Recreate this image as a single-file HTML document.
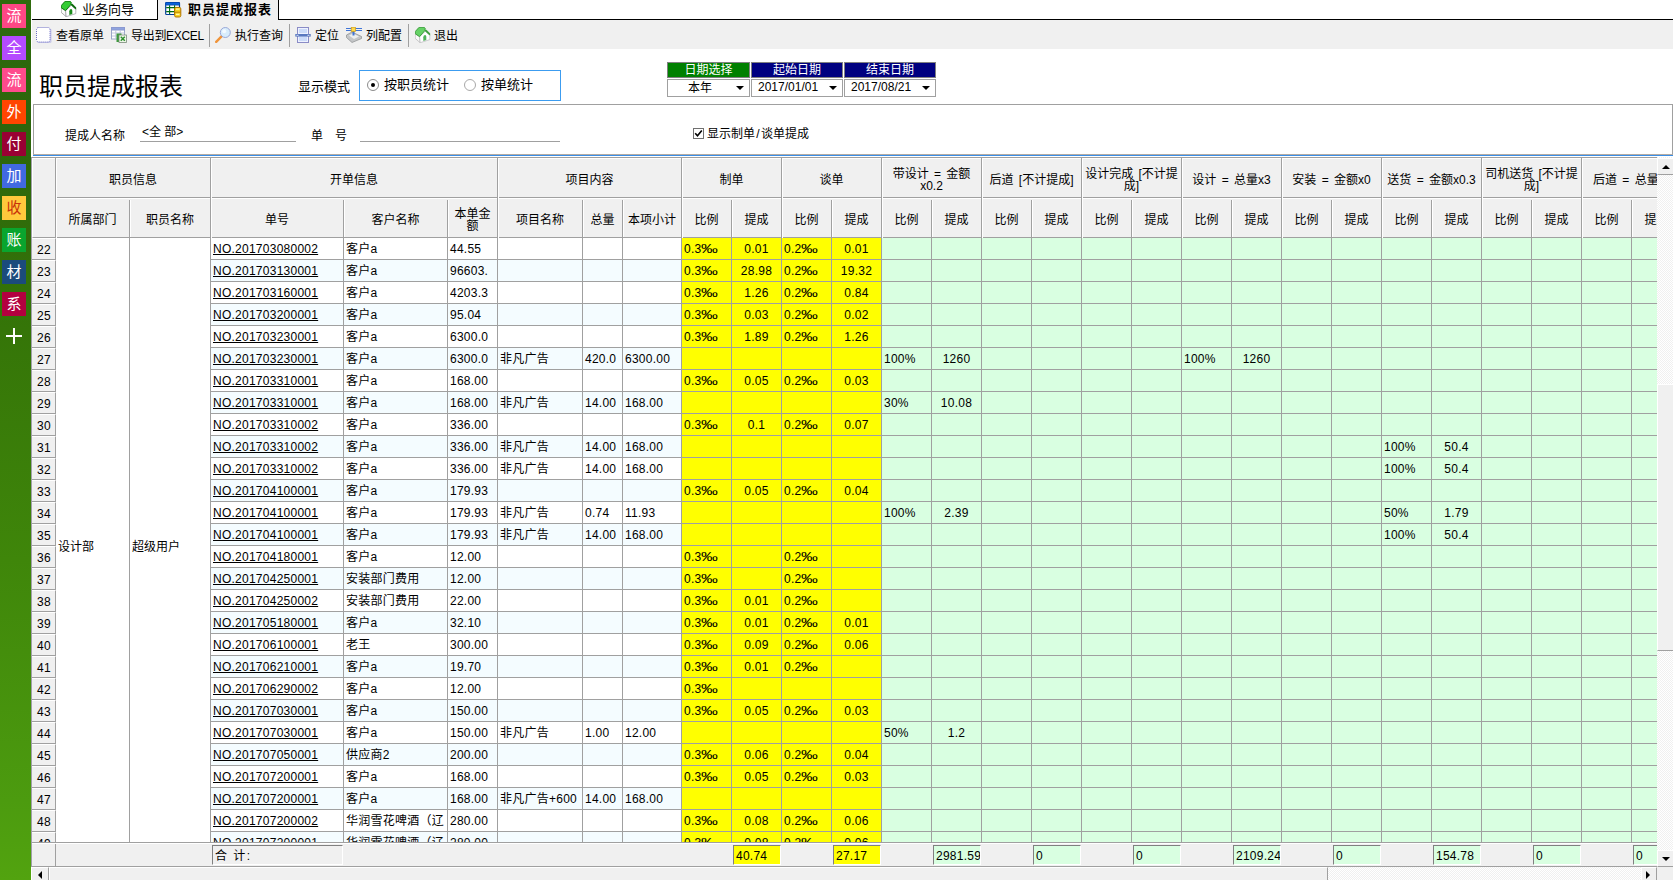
<!DOCTYPE html>
<html lang="zh-CN">
<head>
<meta charset="utf-8">
<title>职员提成报表</title>
<style>
html,body{margin:0;padding:0;}
body{width:1673px;height:880px;overflow:hidden;background:#fff;position:relative;
 font-family:"Liberation Sans","Noto Sans CJK SC",sans-serif;font-size:12px;color:#000;}
.abs,.abs-c>*{position:absolute;}
div{box-sizing:border-box;}
/* sidebar */
#side{position:absolute;left:0;top:0;width:31px;height:880px;
 background:linear-gradient(to bottom,#2f6b0d 0px,#2c650c 130px,#357508 330px,#3f860a 560px,#4c9b0f 800px,#52a30f 880px);}
#side .ic{position:absolute;left:2px;width:24px;height:24px;color:#fff;font-size:15px;line-height:22px;text-align:center;
 font-family:"Noto Sans CJK SC","Liberation Sans",sans-serif;}
/* tabs */
#tabline1{position:absolute;left:32px;top:19px;width:126px;height:1px;background:#000;}
#tabline2{position:absolute;left:278px;top:19px;width:1395px;height:1px;background:#000;}
#tab2{position:absolute;left:157px;top:0;width:122px;height:20px;background:#f0f0f0;border-left:1px solid #000;border-right:1px solid #000;}
.tabtxt{position:absolute;top:2px;height:16px;line-height:16px;font-size:13px;white-space:nowrap;}
/* toolbar */
#tb{position:absolute;left:32px;top:20px;width:1641px;height:29px;background:#f0f0f0;}
#tb .t{position:absolute;top:8px;height:16px;line-height:16px;font-size:12px;white-space:nowrap;}
#tb .sep{position:absolute;top:4px;width:1px;height:23px;background:#a0a0a0;}
#tb svg{position:absolute;top:7px;}
/* grid */
#grid{position:absolute;left:32px;top:157px;width:1625px;height:710px;overflow:hidden;background:#fff;}
.row{position:absolute;left:0;width:1625px;height:22px;}
.row .c{position:absolute;top:0;height:22px;border-right:1px solid #a0a0a0;border-bottom:1px solid #a0a0a0;background:#fff;
 line-height:23px;padding-left:2px;white-space:nowrap;overflow:hidden;letter-spacing:0.25px;}
.row.alt .c{background:#f4fcff;}
.row .c.y{background:#ffff00;}
.row .c.g{background:#d9ffe1;}
.row .c.ctr{text-align:center;padding-left:0;}
.row .rn{position:absolute;left:0;top:0;width:24px;height:22px;background:#f0f0f0;border-right:1px solid #a0a0a0;border-bottom:1px solid #a0a0a0;
 border-top:1px solid #fff;text-align:center;line-height:23px;letter-spacing:0.3px;padding-left:1px;}
.row u{text-decoration:underline;text-underline-offset:1px;}
.hg,.hs{position:absolute;display:flex;align-items:center;justify-content:center;text-align:center;line-height:12px;overflow:hidden;}
.hg{top:2px;height:38px;}
.hs{top:42px;height:38px;}
.hg span,.hs span{display:block;width:100%;word-spacing:2px;}
.hg span{padding-top:3px;}
.hs span{padding-top:4px;}
.vl{position:absolute;width:2px;background:linear-gradient(to right,#a0a0a0 0,#a0a0a0 1px,#fff 1px,#fff 2px);}
#foot{position:absolute;left:0;top:686px;width:1625px;height:24px;background:#f0f0f0;border-top:1px solid #fff;border-bottom:1px solid #a0a0a0;}
.fb{position:absolute;top:1px;height:20px;border-top:1px solid #808080;border-left:1px solid #808080;border-right:1px solid #fff;border-bottom:1px solid #fff;
 line-height:21px;padding-left:2px;white-space:nowrap;overflow:hidden;background:#f0f0f0;letter-spacing:0.25px;}
.fb.y{background:#ffff00;}
.fb.g{background:#d9ffe1;}
.pm{display:inline-block;width:17px;transform:scaleX(1.4);transform-origin:0 50%;letter-spacing:0;}
.tri{position:absolute;width:0;height:0;}
</style>
</head>
<body>
<!-- left sidebar -->
<div id="side">
 <div class="ic" style="top:4px;background:#ff4785">流</div>
 <div class="ic" style="top:36px;background:#b44bff">全</div>
 <div class="ic" style="top:68px;background:#ff4b8c">流</div>
 <div class="ic" style="top:100px;background:#ff4500">外</div>
 <div class="ic" style="top:132px;background:#990033">付</div>
 <div class="ic" style="top:164px;background:#4169e1">加</div>
 <div class="ic" style="top:196px;background:#ffc93c;color:#c8320a">收</div>
 <div class="ic" style="top:228px;background:#0aa52e">账</div>
 <div class="ic" style="top:260px;background:#1b4b7c">材</div>
 <div class="ic" style="top:292px;background:#b3003f">系</div>
 <div style="position:absolute;left:6px;top:335px;width:16px;height:2px;background:#fff"></div>
 <div style="position:absolute;left:13px;top:328px;width:2px;height:16px;background:#fff"></div>
</div>

<!-- tabs -->
<div id="tabline1"></div><div id="tabline2"></div>
<div id="tab2"></div>
<svg class="abs" style="left:61px;top:1px" width="16" height="16" viewBox="0 0 16 16">
 <polygon points="0.2,6.8 4.6,9.7 5.2,15.7 0.2,11.4" fill="#fafafa" stroke="#8c8c8c" stroke-width="0.7"/>
 <polygon points="4.6,9.7 10.3,4.3 14.8,8 14.8,12.6 5.2,15.7" fill="#ffffff" stroke="#9a9aa0" stroke-width="0.7"/>
 <polygon points="9.3,2.8 11.4,2.8 15.2,6.6 15.2,8.4 13.6,7.6 10.4,4.6" fill="#0b6b0b"/>
 <polygon points="0.3,4.5 4.1,0.3 9.2,0.3 10.1,1.3 9.9,3.5 4.6,9.6 0.3,6.8" fill="#33cc33" stroke="#0d7a0d" stroke-width="1"/>
 <path d="M8.3 13.9V10.2Q8.3 8.3 9.9 8.1Q11.3 8 11.3 9.8V12.9Z" fill="#1c8c1c"/>
</svg>
<div class="tabtxt" style="left:82px">业务向导</div>
<svg class="abs" style="left:165px;top:2px" width="17" height="16" viewBox="0 0 17 16">
 <rect x="0.7" y="0.7" width="13.8" height="11.8" rx="0.8" fill="#ffffff" stroke="#003f98" stroke-width="1.2"/>
 <rect x="0.7" y="0.5" width="13.8" height="2.6" rx="0.6" fill="#0a62dc" stroke="#0046b0" stroke-width="0.8"/>
 <path d="M1.2 5.6H14M1.2 9.6H14M4.6 3.2V12M9.6 3.2V12" stroke="#006a10" stroke-width="1.1" fill="none"/>
 <rect x="9.6" y="5.4" width="6.2" height="9.6" rx="1.4" fill="#f7d21e" stroke="#b27400" stroke-width="1"/>
 <path d="M10 10.2H15.4" stroke="#b27400" stroke-width="0.9"/>
 <path d="M11 7.2H14.4M11 12.4H14.4" stroke="#fff6a8" stroke-width="1.2"/>
</svg>
<div class="tabtxt" style="left:188px;font-weight:bold;letter-spacing:1px">职员提成报表</div>

<!-- toolbar -->
<div id="tb">
 <svg style="left:4px" width="16" height="16" viewBox="0 0 16 16">
  <rect x="1.5" y="1.5" width="14" height="14.5" rx="1.5" fill="#c9c9e8"/>
  <rect x="0.5" y="0.5" width="13.5" height="14.5" rx="2" fill="#fff" stroke="#6c6cc4" stroke-width="1" stroke-dasharray="1 1"/>
 </svg>
 <div class="t" style="left:24px">查看原单</div>
 <svg style="left:79px" width="16" height="16" viewBox="0 0 16 16">
  <rect x="0.5" y="0.5" width="13" height="11.5" fill="#fff" stroke="#9aa6c8"/>
  <rect x="0.5" y="0.5" width="13" height="2.5" fill="#8fa4e0" stroke="#8c9ad0"/>
  <path d="M1 6H13.5M1 9H13.5M4.8 3V12M9.2 3V12" stroke="#c0c6dc" stroke-width="1" fill="none"/>
  <rect x="5.5" y="6.5" width="5" height="8.5" fill="#3d9a3d"/>
  <rect x="8" y="8" width="7.5" height="7.5" fill="#f0f8ea" stroke="#7a8a7a" stroke-width="0.8"/>
  <path d="M9.8 9.8L13.8 13.8M13.8 9.8L9.8 13.8" stroke="#2f8f2f" stroke-width="1.5"/>
 </svg>
 <div class="t" style="left:99px;letter-spacing:-0.3px">导出到EXCEL</div>
 <div class="sep" style="left:177px"></div>
 <svg style="left:183px" width="16" height="16" viewBox="0 0 16 16">
  <path d="M6.8 9.2L1.2 14.8" stroke="#f0943a" stroke-width="2.4" stroke-linecap="round"/>
  <circle cx="10.3" cy="5.5" r="5" fill="#d8ecfb" stroke="#9aa8d8" stroke-width="1"/>
  <circle cx="9.2" cy="4.3" r="2" fill="#f4faff"/>
 </svg>
 <div class="t" style="left:203px">执行查询</div>
 <div class="sep" style="left:257px"></div>
 <svg style="left:263px" width="16" height="16" viewBox="0 0 16 16">
  <rect x="2.5" y="0.5" width="11" height="15" fill="#eef2ff" stroke="#8a8cc6"/>
  <path d="M4 3H12M4 5H12M4 11H12M4 13H12" stroke="#a8c4f4" stroke-width="1"/>
  <rect x="0.3" y="7" width="15.4" height="2.6" fill="#5878c0"/>
  <path d="M1.5 8.3H3.5M12.5 8.3H14.5" stroke="#fff" stroke-width="0.8"/>
 </svg>
 <div class="t" style="left:283px">定位</div>
 <svg style="left:314px" width="16" height="16" viewBox="0 0 16 16">
  <path d="M0 1.5H16M0 3.5H16" stroke="#3f74d6" stroke-width="1"/>
  <polygon points="0.5,8 6,5 15.5,9.5 15.5,11.5 6,15.5 0.5,10.5" fill="#c4c6c8" stroke="#8a8c8e" stroke-width="0.7"/>
  <polygon points="3,8.5 7,6.5 13,9.5 8,12" fill="#eceeef"/>
  <rect x="6.5" y="4" width="2" height="4.5" fill="#3f74d6"/>
  <rect x="5.2" y="0.2" width="4.4" height="4.2" fill="#ffd84a" stroke="#c89a1a" stroke-width="0.7"/>
 </svg>
 <div class="t" style="left:334px">列配置</div>
 <div class="sep" style="left:376px"></div>
 <svg style="left:383px" width="16" height="16" viewBox="0 0 16 16">
 <polygon points="0.2,6.8 4.6,9.7 5.2,15.7 0.2,11.4" fill="#fafafa" stroke="#b0b0b0" stroke-width="0.7"/>
 <polygon points="4.6,9.7 10.3,4.3 14.8,8 14.8,12.6 5.2,15.7" fill="#ffffff" stroke="#b8b8bc" stroke-width="0.7"/>
 <polygon points="9.3,2.8 11.4,2.8 15.2,6.6 15.2,8.4 13.6,7.6 10.4,4.6" fill="#3f9f3f"/>
 <polygon points="0.3,4.5 4.1,0.3 9.2,0.3 10.1,1.3 9.9,3.5 4.6,9.6 0.3,6.8" fill="#66d266" stroke="#3f9f3f" stroke-width="1"/>
 <path d="M8.3 13.9V10.2Q8.3 8.3 9.9 8.1Q11.3 8 11.3 9.8V12.9Z" fill="#4fb25a"/>
</svg>
 <div class="t" style="left:402px">退出</div>
</div>

<!-- title + mode -->
<div class="abs" style="left:39px;top:70px;height:34px;line-height:34px;font-size:24px;white-space:nowrap;font-family:'Liberation Sans','Noto Sans CJK SC',sans-serif">职员提成报表</div>
<div class="abs" style="left:298px;top:77px;height:20px;line-height:20px;font-size:13px;white-space:nowrap">显示模式</div>
<div class="abs" style="left:359px;top:70px;width:202px;height:31px;border:1px solid #3c9cf0;background:#fff"></div>
<div class="abs" style="left:367px;top:79px;width:12px;height:12px;border:1px solid #8c8c8c;border-radius:50%;background:#fff"></div>
<div class="abs" style="left:371px;top:83px;width:4px;height:4px;border-radius:50%;background:#000"></div>
<div class="abs" style="left:384px;top:75px;height:20px;line-height:20px;font-size:13px;white-space:nowrap">按职员统计</div>
<div class="abs" style="left:464px;top:79px;width:12px;height:12px;border:1px solid #a8a8a8;border-radius:50%;background:#fff"></div>
<div class="abs" style="left:481px;top:75px;height:20px;line-height:20px;font-size:13px;white-space:nowrap">按单统计</div>

<!-- date boxes -->
<div class="abs" style="left:667px;top:62px;width:83px;height:16px;background:#008000;border:1px solid #808080;color:#fff;text-align:center;line-height:15px">日期选择</div>
<div class="abs" style="left:751px;top:62px;width:92px;height:16px;background:#000080;border:1px solid #808080;color:#fff;text-align:center;line-height:15px">起始日期</div>
<div class="abs" style="left:844px;top:62px;width:92px;height:16px;background:#000080;border:1px solid #808080;color:#fff;text-align:center;line-height:15px">结束日期</div>
<div class="abs" style="left:667px;top:79px;width:83px;height:18px;background:#fff;border:1px solid #a0a0a0;line-height:17px;padding-left:20px">本年</div>
<div class="abs" style="left:751px;top:79px;width:92px;height:18px;background:#fff;border:1px solid #a0a0a0;line-height:15px;padding-left:6px">2017/01/01</div>
<div class="abs" style="left:844px;top:79px;width:92px;height:18px;background:#fff;border:1px solid #a0a0a0;line-height:15px;padding-left:6px">2017/08/21</div>
<div class="tri" style="left:736px;top:86px;border-left:4px solid transparent;border-right:4px solid transparent;border-top:4px solid #000"></div>
<div class="tri" style="left:829px;top:86px;border-left:4px solid transparent;border-right:4px solid transparent;border-top:4px solid #000"></div>
<div class="tri" style="left:922px;top:86px;border-left:4px solid transparent;border-right:4px solid transparent;border-top:4px solid #000"></div>

<!-- filter panel -->
<div class="abs" style="left:33px;top:104px;width:1640px;height:52px;border:1px solid #a0a0a0;border-bottom:none;background:#fff"></div>
<div class="abs" style="left:33px;top:154px;width:1640px;height:1px;background:#b4aca4"></div>
<div class="abs" style="left:33px;top:155px;width:1640px;height:1px;background:#3a8ee6"></div>
<div class="abs" style="left:31px;top:157px;width:1px;height:710px;background:#a0a0a8"></div>
<div class="abs" style="left:65px;top:127px;height:18px;line-height:18px;white-space:nowrap">提成人名称</div>
<div class="abs" style="left:142px;top:123px;height:18px;line-height:18px;white-space:nowrap">&lt;全 部&gt;</div>
<div class="abs" style="left:140px;top:141px;width:156px;height:1px;background:#a0a0a0"></div>
<div class="abs" style="left:311px;top:127px;height:18px;line-height:18px;white-space:nowrap">单<span style="display:inline-block;width:12px"> </span>号</div>
<div class="abs" style="left:360px;top:141px;width:200px;height:1px;background:#a0a0a0"></div>
<div class="abs" style="left:693px;top:128px;width:11px;height:11px;border:1px solid #707070;background:#fff"></div>
<svg class="abs" style="left:694px;top:129px" width="9" height="9" viewBox="0 0 9 9"><path d="M1.2 4.2L3.5 6.8L7.8 1.5" fill="none" stroke="#000" stroke-width="1.6"/></svg>
<div class="abs" style="left:707px;top:125px;height:18px;line-height:18px;white-space:nowrap">显示制单<span style="display:inline-block;width:6px;text-align:center">/</span>谈单提成</div>

<!-- grid -->
<div id="grid">
 <div style="position:absolute;left:0;top:0;width:1625px;height:1px;background:#a0a0a0"></div>
 <div style="position:absolute;left:0;top:1px;width:1625px;height:80px;background:#f0f0f0;border-bottom:1px solid #a0a0a0;border-top:1px solid #fff;border-left:1px solid #fff"></div>
 <div style="position:absolute;left:24px;top:40px;width:1601px;height:2px;background:linear-gradient(to bottom,#a0a0a0 0,#a0a0a0 1px,#fff 1px,#fff 2px)"></div>
<div class="hg" style="left:24px;width:154px"><span>职员信息</span></div>
<div class="hg" style="left:179px;width:286px"><span>开单信息</span></div>
<div class="hg" style="left:466px;width:183px"><span>项目内容</span></div>
<div class="hg" style="left:650px;width:99px"><span>制单</span></div>
<div class="hg" style="left:750px;width:99px"><span>谈单</span></div>
<div class="hg" style="left:850px;width:99px"><span>带设计 = 金额<br>x0.2</span></div>
<div class="hg" style="left:950px;width:99px"><span>后道 [不计提成]</span></div>
<div class="hg" style="left:1050px;width:99px"><span>设计完成 [不计提<br>成]</span></div>
<div class="hg" style="left:1150px;width:99px"><span>设计 = 总量x3</span></div>
<div class="hg" style="left:1250px;width:99px"><span>安装 = 金额x0</span></div>
<div class="hg" style="left:1350px;width:99px"><span>送货 = 金额x0.3</span></div>
<div class="hg" style="left:1450px;width:99px"><span>司机送货 [不计提<br>成]</span></div>
<div class="hg" style="left:1550px;width:99px"><span style="white-space:nowrap;text-align:left;padding-left:11px">后道 = 总量x1</span></div>
<div class="hs" style="left:24px;width:73px"><span>所属部门</span></div>
<div class="hs" style="left:98px;width:80px"><span>职员名称</span></div>
<div class="hs" style="left:179px;width:132px"><span>单号</span></div>
<div class="hs" style="left:312px;width:103px"><span>客户名称</span></div>
<div class="hs" style="left:416px;width:49px"><span>本单金<br>额</span></div>
<div class="hs" style="left:466px;width:84px"><span>项目名称</span></div>
<div class="hs" style="left:551px;width:39px"><span>总量</span></div>
<div class="hs" style="left:591px;width:58px"><span>本项小计</span></div>
<div class="hs" style="left:650px;width:49px"><span>比例</span></div>
<div class="hs" style="left:700px;width:49px"><span>提成</span></div>
<div class="hs" style="left:750px;width:49px"><span>比例</span></div>
<div class="hs" style="left:800px;width:49px"><span>提成</span></div>
<div class="hs" style="left:850px;width:49px"><span>比例</span></div>
<div class="hs" style="left:900px;width:49px"><span>提成</span></div>
<div class="hs" style="left:950px;width:49px"><span>比例</span></div>
<div class="hs" style="left:1000px;width:49px"><span>提成</span></div>
<div class="hs" style="left:1050px;width:49px"><span>比例</span></div>
<div class="hs" style="left:1100px;width:49px"><span>提成</span></div>
<div class="hs" style="left:1150px;width:49px"><span>比例</span></div>
<div class="hs" style="left:1200px;width:49px"><span>提成</span></div>
<div class="hs" style="left:1250px;width:49px"><span>比例</span></div>
<div class="hs" style="left:1300px;width:49px"><span>提成</span></div>
<div class="hs" style="left:1350px;width:49px"><span>比例</span></div>
<div class="hs" style="left:1400px;width:49px"><span>提成</span></div>
<div class="hs" style="left:1450px;width:49px"><span>比例</span></div>
<div class="hs" style="left:1500px;width:49px"><span>提成</span></div>
<div class="hs" style="left:1550px;width:49px"><span>比例</span></div>
<div class="hs" style="left:1600px;width:49px"><span>提成</span></div>
<div class="vl" style="left:23px;top:1px;height:80px"></div>
<div class="vl" style="left:97px;top:43px;height:37px"></div>
<div class="vl" style="left:178px;top:1px;height:80px"></div>
<div class="vl" style="left:311px;top:43px;height:37px"></div>
<div class="vl" style="left:415px;top:43px;height:37px"></div>
<div class="vl" style="left:465px;top:1px;height:80px"></div>
<div class="vl" style="left:550px;top:43px;height:37px"></div>
<div class="vl" style="left:590px;top:43px;height:37px"></div>
<div class="vl" style="left:649px;top:1px;height:80px"></div>
<div class="vl" style="left:699px;top:43px;height:37px"></div>
<div class="vl" style="left:749px;top:1px;height:80px"></div>
<div class="vl" style="left:799px;top:43px;height:37px"></div>
<div class="vl" style="left:849px;top:1px;height:80px"></div>
<div class="vl" style="left:899px;top:43px;height:37px"></div>
<div class="vl" style="left:949px;top:1px;height:80px"></div>
<div class="vl" style="left:999px;top:43px;height:37px"></div>
<div class="vl" style="left:1049px;top:1px;height:80px"></div>
<div class="vl" style="left:1099px;top:43px;height:37px"></div>
<div class="vl" style="left:1149px;top:1px;height:80px"></div>
<div class="vl" style="left:1199px;top:43px;height:37px"></div>
<div class="vl" style="left:1249px;top:1px;height:80px"></div>
<div class="vl" style="left:1299px;top:43px;height:37px"></div>
<div class="vl" style="left:1349px;top:1px;height:80px"></div>
<div class="vl" style="left:1399px;top:43px;height:37px"></div>
<div class="vl" style="left:1449px;top:1px;height:80px"></div>
<div class="vl" style="left:1499px;top:43px;height:37px"></div>
<div class="vl" style="left:1549px;top:1px;height:80px"></div>
<div class="vl" style="left:1599px;top:43px;height:37px"></div>
 <!-- merged dept / employee cells -->
 <div style="position:absolute;left:24px;top:81px;width:74px;height:605px;background:#fff;border-right:1px solid #a0a0a0;border-bottom:1px solid #a0a0a0;line-height:618px;padding-left:2px;white-space:nowrap">设计部</div>
 <div style="position:absolute;left:98px;top:81px;width:81px;height:605px;background:#fff;border-right:1px solid #a0a0a0;border-bottom:1px solid #a0a0a0;line-height:618px;padding-left:2px;white-space:nowrap">超级用户</div>
 <div id="rows" style="position:absolute;left:0;top:-157px;width:1625px;height:843px;overflow:hidden;clip-path:inset(238px 0 0 0)">
<div class="row" style="top:238px">
<div class="rn">22</div>
<div class="c" style="left:179px;width:133px"><u>NO.201703080002</u></div>
<div class="c" style="left:312px;width:104px">客户a</div>
<div class="c" style="left:416px;width:50px">44.55</div>
<div class="c" style="left:466px;width:85px"></div>
<div class="c" style="left:551px;width:40px"></div>
<div class="c" style="left:591px;width:59px"></div>
<div class="c y" style="left:650px;width:50px">0.3<span class="pm">‰</span></div>
<div class="c y ctr" style="left:700px;width:50px">0.01</div>
<div class="c y" style="left:750px;width:50px">0.2<span class="pm">‰</span></div>
<div class="c y ctr" style="left:800px;width:50px">0.01</div>
<div class="c g" style="left:850px;width:50px"></div>
<div class="c g ctr" style="left:900px;width:50px"></div>
<div class="c g" style="left:950px;width:50px"></div>
<div class="c g ctr" style="left:1000px;width:50px"></div>
<div class="c g" style="left:1050px;width:50px"></div>
<div class="c g ctr" style="left:1100px;width:50px"></div>
<div class="c g" style="left:1150px;width:50px"></div>
<div class="c g ctr" style="left:1200px;width:50px"></div>
<div class="c g" style="left:1250px;width:50px"></div>
<div class="c g ctr" style="left:1300px;width:50px"></div>
<div class="c g" style="left:1350px;width:50px"></div>
<div class="c g ctr" style="left:1400px;width:50px"></div>
<div class="c g" style="left:1450px;width:50px"></div>
<div class="c g ctr" style="left:1500px;width:50px"></div>
<div class="c g" style="left:1550px;width:50px"></div>
<div class="c g ctr" style="left:1600px;width:50px"></div>
</div>
<div class="row alt" style="top:260px">
<div class="rn">23</div>
<div class="c" style="left:179px;width:133px"><u>NO.201703130001</u></div>
<div class="c" style="left:312px;width:104px">客户a</div>
<div class="c" style="left:416px;width:50px">96603.</div>
<div class="c" style="left:466px;width:85px"></div>
<div class="c" style="left:551px;width:40px"></div>
<div class="c" style="left:591px;width:59px"></div>
<div class="c y" style="left:650px;width:50px">0.3<span class="pm">‰</span></div>
<div class="c y ctr" style="left:700px;width:50px">28.98</div>
<div class="c y" style="left:750px;width:50px">0.2<span class="pm">‰</span></div>
<div class="c y ctr" style="left:800px;width:50px">19.32</div>
<div class="c g" style="left:850px;width:50px"></div>
<div class="c g ctr" style="left:900px;width:50px"></div>
<div class="c g" style="left:950px;width:50px"></div>
<div class="c g ctr" style="left:1000px;width:50px"></div>
<div class="c g" style="left:1050px;width:50px"></div>
<div class="c g ctr" style="left:1100px;width:50px"></div>
<div class="c g" style="left:1150px;width:50px"></div>
<div class="c g ctr" style="left:1200px;width:50px"></div>
<div class="c g" style="left:1250px;width:50px"></div>
<div class="c g ctr" style="left:1300px;width:50px"></div>
<div class="c g" style="left:1350px;width:50px"></div>
<div class="c g ctr" style="left:1400px;width:50px"></div>
<div class="c g" style="left:1450px;width:50px"></div>
<div class="c g ctr" style="left:1500px;width:50px"></div>
<div class="c g" style="left:1550px;width:50px"></div>
<div class="c g ctr" style="left:1600px;width:50px"></div>
</div>
<div class="row" style="top:282px">
<div class="rn">24</div>
<div class="c" style="left:179px;width:133px"><u>NO.201703160001</u></div>
<div class="c" style="left:312px;width:104px">客户a</div>
<div class="c" style="left:416px;width:50px">4203.3</div>
<div class="c" style="left:466px;width:85px"></div>
<div class="c" style="left:551px;width:40px"></div>
<div class="c" style="left:591px;width:59px"></div>
<div class="c y" style="left:650px;width:50px">0.3<span class="pm">‰</span></div>
<div class="c y ctr" style="left:700px;width:50px">1.26</div>
<div class="c y" style="left:750px;width:50px">0.2<span class="pm">‰</span></div>
<div class="c y ctr" style="left:800px;width:50px">0.84</div>
<div class="c g" style="left:850px;width:50px"></div>
<div class="c g ctr" style="left:900px;width:50px"></div>
<div class="c g" style="left:950px;width:50px"></div>
<div class="c g ctr" style="left:1000px;width:50px"></div>
<div class="c g" style="left:1050px;width:50px"></div>
<div class="c g ctr" style="left:1100px;width:50px"></div>
<div class="c g" style="left:1150px;width:50px"></div>
<div class="c g ctr" style="left:1200px;width:50px"></div>
<div class="c g" style="left:1250px;width:50px"></div>
<div class="c g ctr" style="left:1300px;width:50px"></div>
<div class="c g" style="left:1350px;width:50px"></div>
<div class="c g ctr" style="left:1400px;width:50px"></div>
<div class="c g" style="left:1450px;width:50px"></div>
<div class="c g ctr" style="left:1500px;width:50px"></div>
<div class="c g" style="left:1550px;width:50px"></div>
<div class="c g ctr" style="left:1600px;width:50px"></div>
</div>
<div class="row alt" style="top:304px">
<div class="rn">25</div>
<div class="c" style="left:179px;width:133px"><u>NO.201703200001</u></div>
<div class="c" style="left:312px;width:104px">客户a</div>
<div class="c" style="left:416px;width:50px">95.04</div>
<div class="c" style="left:466px;width:85px"></div>
<div class="c" style="left:551px;width:40px"></div>
<div class="c" style="left:591px;width:59px"></div>
<div class="c y" style="left:650px;width:50px">0.3<span class="pm">‰</span></div>
<div class="c y ctr" style="left:700px;width:50px">0.03</div>
<div class="c y" style="left:750px;width:50px">0.2<span class="pm">‰</span></div>
<div class="c y ctr" style="left:800px;width:50px">0.02</div>
<div class="c g" style="left:850px;width:50px"></div>
<div class="c g ctr" style="left:900px;width:50px"></div>
<div class="c g" style="left:950px;width:50px"></div>
<div class="c g ctr" style="left:1000px;width:50px"></div>
<div class="c g" style="left:1050px;width:50px"></div>
<div class="c g ctr" style="left:1100px;width:50px"></div>
<div class="c g" style="left:1150px;width:50px"></div>
<div class="c g ctr" style="left:1200px;width:50px"></div>
<div class="c g" style="left:1250px;width:50px"></div>
<div class="c g ctr" style="left:1300px;width:50px"></div>
<div class="c g" style="left:1350px;width:50px"></div>
<div class="c g ctr" style="left:1400px;width:50px"></div>
<div class="c g" style="left:1450px;width:50px"></div>
<div class="c g ctr" style="left:1500px;width:50px"></div>
<div class="c g" style="left:1550px;width:50px"></div>
<div class="c g ctr" style="left:1600px;width:50px"></div>
</div>
<div class="row" style="top:326px">
<div class="rn">26</div>
<div class="c" style="left:179px;width:133px"><u>NO.201703230001</u></div>
<div class="c" style="left:312px;width:104px">客户a</div>
<div class="c" style="left:416px;width:50px">6300.0</div>
<div class="c" style="left:466px;width:85px"></div>
<div class="c" style="left:551px;width:40px"></div>
<div class="c" style="left:591px;width:59px"></div>
<div class="c y" style="left:650px;width:50px">0.3<span class="pm">‰</span></div>
<div class="c y ctr" style="left:700px;width:50px">1.89</div>
<div class="c y" style="left:750px;width:50px">0.2<span class="pm">‰</span></div>
<div class="c y ctr" style="left:800px;width:50px">1.26</div>
<div class="c g" style="left:850px;width:50px"></div>
<div class="c g ctr" style="left:900px;width:50px"></div>
<div class="c g" style="left:950px;width:50px"></div>
<div class="c g ctr" style="left:1000px;width:50px"></div>
<div class="c g" style="left:1050px;width:50px"></div>
<div class="c g ctr" style="left:1100px;width:50px"></div>
<div class="c g" style="left:1150px;width:50px"></div>
<div class="c g ctr" style="left:1200px;width:50px"></div>
<div class="c g" style="left:1250px;width:50px"></div>
<div class="c g ctr" style="left:1300px;width:50px"></div>
<div class="c g" style="left:1350px;width:50px"></div>
<div class="c g ctr" style="left:1400px;width:50px"></div>
<div class="c g" style="left:1450px;width:50px"></div>
<div class="c g ctr" style="left:1500px;width:50px"></div>
<div class="c g" style="left:1550px;width:50px"></div>
<div class="c g ctr" style="left:1600px;width:50px"></div>
</div>
<div class="row alt" style="top:348px">
<div class="rn">27</div>
<div class="c" style="left:179px;width:133px"><u>NO.201703230001</u></div>
<div class="c" style="left:312px;width:104px">客户a</div>
<div class="c" style="left:416px;width:50px">6300.0</div>
<div class="c" style="left:466px;width:85px">非凡广告</div>
<div class="c" style="left:551px;width:40px">420.0</div>
<div class="c" style="left:591px;width:59px">6300.00</div>
<div class="c y" style="left:650px;width:50px"></div>
<div class="c y ctr" style="left:700px;width:50px"></div>
<div class="c y" style="left:750px;width:50px"></div>
<div class="c y ctr" style="left:800px;width:50px"></div>
<div class="c g" style="left:850px;width:50px">100%</div>
<div class="c g ctr" style="left:900px;width:50px">1260</div>
<div class="c g" style="left:950px;width:50px"></div>
<div class="c g ctr" style="left:1000px;width:50px"></div>
<div class="c g" style="left:1050px;width:50px"></div>
<div class="c g ctr" style="left:1100px;width:50px"></div>
<div class="c g" style="left:1150px;width:50px">100%</div>
<div class="c g ctr" style="left:1200px;width:50px">1260</div>
<div class="c g" style="left:1250px;width:50px"></div>
<div class="c g ctr" style="left:1300px;width:50px"></div>
<div class="c g" style="left:1350px;width:50px"></div>
<div class="c g ctr" style="left:1400px;width:50px"></div>
<div class="c g" style="left:1450px;width:50px"></div>
<div class="c g ctr" style="left:1500px;width:50px"></div>
<div class="c g" style="left:1550px;width:50px"></div>
<div class="c g ctr" style="left:1600px;width:50px"></div>
</div>
<div class="row" style="top:370px">
<div class="rn">28</div>
<div class="c" style="left:179px;width:133px"><u>NO.201703310001</u></div>
<div class="c" style="left:312px;width:104px">客户a</div>
<div class="c" style="left:416px;width:50px">168.00</div>
<div class="c" style="left:466px;width:85px"></div>
<div class="c" style="left:551px;width:40px"></div>
<div class="c" style="left:591px;width:59px"></div>
<div class="c y" style="left:650px;width:50px">0.3<span class="pm">‰</span></div>
<div class="c y ctr" style="left:700px;width:50px">0.05</div>
<div class="c y" style="left:750px;width:50px">0.2<span class="pm">‰</span></div>
<div class="c y ctr" style="left:800px;width:50px">0.03</div>
<div class="c g" style="left:850px;width:50px"></div>
<div class="c g ctr" style="left:900px;width:50px"></div>
<div class="c g" style="left:950px;width:50px"></div>
<div class="c g ctr" style="left:1000px;width:50px"></div>
<div class="c g" style="left:1050px;width:50px"></div>
<div class="c g ctr" style="left:1100px;width:50px"></div>
<div class="c g" style="left:1150px;width:50px"></div>
<div class="c g ctr" style="left:1200px;width:50px"></div>
<div class="c g" style="left:1250px;width:50px"></div>
<div class="c g ctr" style="left:1300px;width:50px"></div>
<div class="c g" style="left:1350px;width:50px"></div>
<div class="c g ctr" style="left:1400px;width:50px"></div>
<div class="c g" style="left:1450px;width:50px"></div>
<div class="c g ctr" style="left:1500px;width:50px"></div>
<div class="c g" style="left:1550px;width:50px"></div>
<div class="c g ctr" style="left:1600px;width:50px"></div>
</div>
<div class="row alt" style="top:392px">
<div class="rn">29</div>
<div class="c" style="left:179px;width:133px"><u>NO.201703310001</u></div>
<div class="c" style="left:312px;width:104px">客户a</div>
<div class="c" style="left:416px;width:50px">168.00</div>
<div class="c" style="left:466px;width:85px">非凡广告</div>
<div class="c" style="left:551px;width:40px">14.00</div>
<div class="c" style="left:591px;width:59px">168.00</div>
<div class="c y" style="left:650px;width:50px"></div>
<div class="c y ctr" style="left:700px;width:50px"></div>
<div class="c y" style="left:750px;width:50px"></div>
<div class="c y ctr" style="left:800px;width:50px"></div>
<div class="c g" style="left:850px;width:50px">30%</div>
<div class="c g ctr" style="left:900px;width:50px">10.08</div>
<div class="c g" style="left:950px;width:50px"></div>
<div class="c g ctr" style="left:1000px;width:50px"></div>
<div class="c g" style="left:1050px;width:50px"></div>
<div class="c g ctr" style="left:1100px;width:50px"></div>
<div class="c g" style="left:1150px;width:50px"></div>
<div class="c g ctr" style="left:1200px;width:50px"></div>
<div class="c g" style="left:1250px;width:50px"></div>
<div class="c g ctr" style="left:1300px;width:50px"></div>
<div class="c g" style="left:1350px;width:50px"></div>
<div class="c g ctr" style="left:1400px;width:50px"></div>
<div class="c g" style="left:1450px;width:50px"></div>
<div class="c g ctr" style="left:1500px;width:50px"></div>
<div class="c g" style="left:1550px;width:50px"></div>
<div class="c g ctr" style="left:1600px;width:50px"></div>
</div>
<div class="row" style="top:414px">
<div class="rn">30</div>
<div class="c" style="left:179px;width:133px"><u>NO.201703310002</u></div>
<div class="c" style="left:312px;width:104px">客户a</div>
<div class="c" style="left:416px;width:50px">336.00</div>
<div class="c" style="left:466px;width:85px"></div>
<div class="c" style="left:551px;width:40px"></div>
<div class="c" style="left:591px;width:59px"></div>
<div class="c y" style="left:650px;width:50px">0.3<span class="pm">‰</span></div>
<div class="c y ctr" style="left:700px;width:50px">0.1</div>
<div class="c y" style="left:750px;width:50px">0.2<span class="pm">‰</span></div>
<div class="c y ctr" style="left:800px;width:50px">0.07</div>
<div class="c g" style="left:850px;width:50px"></div>
<div class="c g ctr" style="left:900px;width:50px"></div>
<div class="c g" style="left:950px;width:50px"></div>
<div class="c g ctr" style="left:1000px;width:50px"></div>
<div class="c g" style="left:1050px;width:50px"></div>
<div class="c g ctr" style="left:1100px;width:50px"></div>
<div class="c g" style="left:1150px;width:50px"></div>
<div class="c g ctr" style="left:1200px;width:50px"></div>
<div class="c g" style="left:1250px;width:50px"></div>
<div class="c g ctr" style="left:1300px;width:50px"></div>
<div class="c g" style="left:1350px;width:50px"></div>
<div class="c g ctr" style="left:1400px;width:50px"></div>
<div class="c g" style="left:1450px;width:50px"></div>
<div class="c g ctr" style="left:1500px;width:50px"></div>
<div class="c g" style="left:1550px;width:50px"></div>
<div class="c g ctr" style="left:1600px;width:50px"></div>
</div>
<div class="row alt" style="top:436px">
<div class="rn">31</div>
<div class="c" style="left:179px;width:133px"><u>NO.201703310002</u></div>
<div class="c" style="left:312px;width:104px">客户a</div>
<div class="c" style="left:416px;width:50px">336.00</div>
<div class="c" style="left:466px;width:85px">非凡广告</div>
<div class="c" style="left:551px;width:40px">14.00</div>
<div class="c" style="left:591px;width:59px">168.00</div>
<div class="c y" style="left:650px;width:50px"></div>
<div class="c y ctr" style="left:700px;width:50px"></div>
<div class="c y" style="left:750px;width:50px"></div>
<div class="c y ctr" style="left:800px;width:50px"></div>
<div class="c g" style="left:850px;width:50px"></div>
<div class="c g ctr" style="left:900px;width:50px"></div>
<div class="c g" style="left:950px;width:50px"></div>
<div class="c g ctr" style="left:1000px;width:50px"></div>
<div class="c g" style="left:1050px;width:50px"></div>
<div class="c g ctr" style="left:1100px;width:50px"></div>
<div class="c g" style="left:1150px;width:50px"></div>
<div class="c g ctr" style="left:1200px;width:50px"></div>
<div class="c g" style="left:1250px;width:50px"></div>
<div class="c g ctr" style="left:1300px;width:50px"></div>
<div class="c g" style="left:1350px;width:50px">100%</div>
<div class="c g ctr" style="left:1400px;width:50px">50.4</div>
<div class="c g" style="left:1450px;width:50px"></div>
<div class="c g ctr" style="left:1500px;width:50px"></div>
<div class="c g" style="left:1550px;width:50px"></div>
<div class="c g ctr" style="left:1600px;width:50px"></div>
</div>
<div class="row" style="top:458px">
<div class="rn">32</div>
<div class="c" style="left:179px;width:133px"><u>NO.201703310002</u></div>
<div class="c" style="left:312px;width:104px">客户a</div>
<div class="c" style="left:416px;width:50px">336.00</div>
<div class="c" style="left:466px;width:85px">非凡广告</div>
<div class="c" style="left:551px;width:40px">14.00</div>
<div class="c" style="left:591px;width:59px">168.00</div>
<div class="c y" style="left:650px;width:50px"></div>
<div class="c y ctr" style="left:700px;width:50px"></div>
<div class="c y" style="left:750px;width:50px"></div>
<div class="c y ctr" style="left:800px;width:50px"></div>
<div class="c g" style="left:850px;width:50px"></div>
<div class="c g ctr" style="left:900px;width:50px"></div>
<div class="c g" style="left:950px;width:50px"></div>
<div class="c g ctr" style="left:1000px;width:50px"></div>
<div class="c g" style="left:1050px;width:50px"></div>
<div class="c g ctr" style="left:1100px;width:50px"></div>
<div class="c g" style="left:1150px;width:50px"></div>
<div class="c g ctr" style="left:1200px;width:50px"></div>
<div class="c g" style="left:1250px;width:50px"></div>
<div class="c g ctr" style="left:1300px;width:50px"></div>
<div class="c g" style="left:1350px;width:50px">100%</div>
<div class="c g ctr" style="left:1400px;width:50px">50.4</div>
<div class="c g" style="left:1450px;width:50px"></div>
<div class="c g ctr" style="left:1500px;width:50px"></div>
<div class="c g" style="left:1550px;width:50px"></div>
<div class="c g ctr" style="left:1600px;width:50px"></div>
</div>
<div class="row alt" style="top:480px">
<div class="rn">33</div>
<div class="c" style="left:179px;width:133px"><u>NO.201704100001</u></div>
<div class="c" style="left:312px;width:104px">客户a</div>
<div class="c" style="left:416px;width:50px">179.93</div>
<div class="c" style="left:466px;width:85px"></div>
<div class="c" style="left:551px;width:40px"></div>
<div class="c" style="left:591px;width:59px"></div>
<div class="c y" style="left:650px;width:50px">0.3<span class="pm">‰</span></div>
<div class="c y ctr" style="left:700px;width:50px">0.05</div>
<div class="c y" style="left:750px;width:50px">0.2<span class="pm">‰</span></div>
<div class="c y ctr" style="left:800px;width:50px">0.04</div>
<div class="c g" style="left:850px;width:50px"></div>
<div class="c g ctr" style="left:900px;width:50px"></div>
<div class="c g" style="left:950px;width:50px"></div>
<div class="c g ctr" style="left:1000px;width:50px"></div>
<div class="c g" style="left:1050px;width:50px"></div>
<div class="c g ctr" style="left:1100px;width:50px"></div>
<div class="c g" style="left:1150px;width:50px"></div>
<div class="c g ctr" style="left:1200px;width:50px"></div>
<div class="c g" style="left:1250px;width:50px"></div>
<div class="c g ctr" style="left:1300px;width:50px"></div>
<div class="c g" style="left:1350px;width:50px"></div>
<div class="c g ctr" style="left:1400px;width:50px"></div>
<div class="c g" style="left:1450px;width:50px"></div>
<div class="c g ctr" style="left:1500px;width:50px"></div>
<div class="c g" style="left:1550px;width:50px"></div>
<div class="c g ctr" style="left:1600px;width:50px"></div>
</div>
<div class="row" style="top:502px">
<div class="rn">34</div>
<div class="c" style="left:179px;width:133px"><u>NO.201704100001</u></div>
<div class="c" style="left:312px;width:104px">客户a</div>
<div class="c" style="left:416px;width:50px">179.93</div>
<div class="c" style="left:466px;width:85px">非凡广告</div>
<div class="c" style="left:551px;width:40px">0.74</div>
<div class="c" style="left:591px;width:59px">11.93</div>
<div class="c y" style="left:650px;width:50px"></div>
<div class="c y ctr" style="left:700px;width:50px"></div>
<div class="c y" style="left:750px;width:50px"></div>
<div class="c y ctr" style="left:800px;width:50px"></div>
<div class="c g" style="left:850px;width:50px">100%</div>
<div class="c g ctr" style="left:900px;width:50px">2.39</div>
<div class="c g" style="left:950px;width:50px"></div>
<div class="c g ctr" style="left:1000px;width:50px"></div>
<div class="c g" style="left:1050px;width:50px"></div>
<div class="c g ctr" style="left:1100px;width:50px"></div>
<div class="c g" style="left:1150px;width:50px"></div>
<div class="c g ctr" style="left:1200px;width:50px"></div>
<div class="c g" style="left:1250px;width:50px"></div>
<div class="c g ctr" style="left:1300px;width:50px"></div>
<div class="c g" style="left:1350px;width:50px">50%</div>
<div class="c g ctr" style="left:1400px;width:50px">1.79</div>
<div class="c g" style="left:1450px;width:50px"></div>
<div class="c g ctr" style="left:1500px;width:50px"></div>
<div class="c g" style="left:1550px;width:50px"></div>
<div class="c g ctr" style="left:1600px;width:50px"></div>
</div>
<div class="row alt" style="top:524px">
<div class="rn">35</div>
<div class="c" style="left:179px;width:133px"><u>NO.201704100001</u></div>
<div class="c" style="left:312px;width:104px">客户a</div>
<div class="c" style="left:416px;width:50px">179.93</div>
<div class="c" style="left:466px;width:85px">非凡广告</div>
<div class="c" style="left:551px;width:40px">14.00</div>
<div class="c" style="left:591px;width:59px">168.00</div>
<div class="c y" style="left:650px;width:50px"></div>
<div class="c y ctr" style="left:700px;width:50px"></div>
<div class="c y" style="left:750px;width:50px"></div>
<div class="c y ctr" style="left:800px;width:50px"></div>
<div class="c g" style="left:850px;width:50px"></div>
<div class="c g ctr" style="left:900px;width:50px"></div>
<div class="c g" style="left:950px;width:50px"></div>
<div class="c g ctr" style="left:1000px;width:50px"></div>
<div class="c g" style="left:1050px;width:50px"></div>
<div class="c g ctr" style="left:1100px;width:50px"></div>
<div class="c g" style="left:1150px;width:50px"></div>
<div class="c g ctr" style="left:1200px;width:50px"></div>
<div class="c g" style="left:1250px;width:50px"></div>
<div class="c g ctr" style="left:1300px;width:50px"></div>
<div class="c g" style="left:1350px;width:50px">100%</div>
<div class="c g ctr" style="left:1400px;width:50px">50.4</div>
<div class="c g" style="left:1450px;width:50px"></div>
<div class="c g ctr" style="left:1500px;width:50px"></div>
<div class="c g" style="left:1550px;width:50px"></div>
<div class="c g ctr" style="left:1600px;width:50px"></div>
</div>
<div class="row" style="top:546px">
<div class="rn">36</div>
<div class="c" style="left:179px;width:133px"><u>NO.201704180001</u></div>
<div class="c" style="left:312px;width:104px">客户a</div>
<div class="c" style="left:416px;width:50px">12.00</div>
<div class="c" style="left:466px;width:85px"></div>
<div class="c" style="left:551px;width:40px"></div>
<div class="c" style="left:591px;width:59px"></div>
<div class="c y" style="left:650px;width:50px">0.3<span class="pm">‰</span></div>
<div class="c y ctr" style="left:700px;width:50px"></div>
<div class="c y" style="left:750px;width:50px">0.2<span class="pm">‰</span></div>
<div class="c y ctr" style="left:800px;width:50px"></div>
<div class="c g" style="left:850px;width:50px"></div>
<div class="c g ctr" style="left:900px;width:50px"></div>
<div class="c g" style="left:950px;width:50px"></div>
<div class="c g ctr" style="left:1000px;width:50px"></div>
<div class="c g" style="left:1050px;width:50px"></div>
<div class="c g ctr" style="left:1100px;width:50px"></div>
<div class="c g" style="left:1150px;width:50px"></div>
<div class="c g ctr" style="left:1200px;width:50px"></div>
<div class="c g" style="left:1250px;width:50px"></div>
<div class="c g ctr" style="left:1300px;width:50px"></div>
<div class="c g" style="left:1350px;width:50px"></div>
<div class="c g ctr" style="left:1400px;width:50px"></div>
<div class="c g" style="left:1450px;width:50px"></div>
<div class="c g ctr" style="left:1500px;width:50px"></div>
<div class="c g" style="left:1550px;width:50px"></div>
<div class="c g ctr" style="left:1600px;width:50px"></div>
</div>
<div class="row alt" style="top:568px">
<div class="rn">37</div>
<div class="c" style="left:179px;width:133px"><u>NO.201704250001</u></div>
<div class="c" style="left:312px;width:104px">安装部门费用</div>
<div class="c" style="left:416px;width:50px">12.00</div>
<div class="c" style="left:466px;width:85px"></div>
<div class="c" style="left:551px;width:40px"></div>
<div class="c" style="left:591px;width:59px"></div>
<div class="c y" style="left:650px;width:50px">0.3<span class="pm">‰</span></div>
<div class="c y ctr" style="left:700px;width:50px"></div>
<div class="c y" style="left:750px;width:50px">0.2<span class="pm">‰</span></div>
<div class="c y ctr" style="left:800px;width:50px"></div>
<div class="c g" style="left:850px;width:50px"></div>
<div class="c g ctr" style="left:900px;width:50px"></div>
<div class="c g" style="left:950px;width:50px"></div>
<div class="c g ctr" style="left:1000px;width:50px"></div>
<div class="c g" style="left:1050px;width:50px"></div>
<div class="c g ctr" style="left:1100px;width:50px"></div>
<div class="c g" style="left:1150px;width:50px"></div>
<div class="c g ctr" style="left:1200px;width:50px"></div>
<div class="c g" style="left:1250px;width:50px"></div>
<div class="c g ctr" style="left:1300px;width:50px"></div>
<div class="c g" style="left:1350px;width:50px"></div>
<div class="c g ctr" style="left:1400px;width:50px"></div>
<div class="c g" style="left:1450px;width:50px"></div>
<div class="c g ctr" style="left:1500px;width:50px"></div>
<div class="c g" style="left:1550px;width:50px"></div>
<div class="c g ctr" style="left:1600px;width:50px"></div>
</div>
<div class="row" style="top:590px">
<div class="rn">38</div>
<div class="c" style="left:179px;width:133px"><u>NO.201704250002</u></div>
<div class="c" style="left:312px;width:104px">安装部门费用</div>
<div class="c" style="left:416px;width:50px">22.00</div>
<div class="c" style="left:466px;width:85px"></div>
<div class="c" style="left:551px;width:40px"></div>
<div class="c" style="left:591px;width:59px"></div>
<div class="c y" style="left:650px;width:50px">0.3<span class="pm">‰</span></div>
<div class="c y ctr" style="left:700px;width:50px">0.01</div>
<div class="c y" style="left:750px;width:50px">0.2<span class="pm">‰</span></div>
<div class="c y ctr" style="left:800px;width:50px"></div>
<div class="c g" style="left:850px;width:50px"></div>
<div class="c g ctr" style="left:900px;width:50px"></div>
<div class="c g" style="left:950px;width:50px"></div>
<div class="c g ctr" style="left:1000px;width:50px"></div>
<div class="c g" style="left:1050px;width:50px"></div>
<div class="c g ctr" style="left:1100px;width:50px"></div>
<div class="c g" style="left:1150px;width:50px"></div>
<div class="c g ctr" style="left:1200px;width:50px"></div>
<div class="c g" style="left:1250px;width:50px"></div>
<div class="c g ctr" style="left:1300px;width:50px"></div>
<div class="c g" style="left:1350px;width:50px"></div>
<div class="c g ctr" style="left:1400px;width:50px"></div>
<div class="c g" style="left:1450px;width:50px"></div>
<div class="c g ctr" style="left:1500px;width:50px"></div>
<div class="c g" style="left:1550px;width:50px"></div>
<div class="c g ctr" style="left:1600px;width:50px"></div>
</div>
<div class="row alt" style="top:612px">
<div class="rn">39</div>
<div class="c" style="left:179px;width:133px"><u>NO.201705180001</u></div>
<div class="c" style="left:312px;width:104px">客户a</div>
<div class="c" style="left:416px;width:50px">32.10</div>
<div class="c" style="left:466px;width:85px"></div>
<div class="c" style="left:551px;width:40px"></div>
<div class="c" style="left:591px;width:59px"></div>
<div class="c y" style="left:650px;width:50px">0.3<span class="pm">‰</span></div>
<div class="c y ctr" style="left:700px;width:50px">0.01</div>
<div class="c y" style="left:750px;width:50px">0.2<span class="pm">‰</span></div>
<div class="c y ctr" style="left:800px;width:50px">0.01</div>
<div class="c g" style="left:850px;width:50px"></div>
<div class="c g ctr" style="left:900px;width:50px"></div>
<div class="c g" style="left:950px;width:50px"></div>
<div class="c g ctr" style="left:1000px;width:50px"></div>
<div class="c g" style="left:1050px;width:50px"></div>
<div class="c g ctr" style="left:1100px;width:50px"></div>
<div class="c g" style="left:1150px;width:50px"></div>
<div class="c g ctr" style="left:1200px;width:50px"></div>
<div class="c g" style="left:1250px;width:50px"></div>
<div class="c g ctr" style="left:1300px;width:50px"></div>
<div class="c g" style="left:1350px;width:50px"></div>
<div class="c g ctr" style="left:1400px;width:50px"></div>
<div class="c g" style="left:1450px;width:50px"></div>
<div class="c g ctr" style="left:1500px;width:50px"></div>
<div class="c g" style="left:1550px;width:50px"></div>
<div class="c g ctr" style="left:1600px;width:50px"></div>
</div>
<div class="row" style="top:634px">
<div class="rn">40</div>
<div class="c" style="left:179px;width:133px"><u>NO.201706100001</u></div>
<div class="c" style="left:312px;width:104px">老王</div>
<div class="c" style="left:416px;width:50px">300.00</div>
<div class="c" style="left:466px;width:85px"></div>
<div class="c" style="left:551px;width:40px"></div>
<div class="c" style="left:591px;width:59px"></div>
<div class="c y" style="left:650px;width:50px">0.3<span class="pm">‰</span></div>
<div class="c y ctr" style="left:700px;width:50px">0.09</div>
<div class="c y" style="left:750px;width:50px">0.2<span class="pm">‰</span></div>
<div class="c y ctr" style="left:800px;width:50px">0.06</div>
<div class="c g" style="left:850px;width:50px"></div>
<div class="c g ctr" style="left:900px;width:50px"></div>
<div class="c g" style="left:950px;width:50px"></div>
<div class="c g ctr" style="left:1000px;width:50px"></div>
<div class="c g" style="left:1050px;width:50px"></div>
<div class="c g ctr" style="left:1100px;width:50px"></div>
<div class="c g" style="left:1150px;width:50px"></div>
<div class="c g ctr" style="left:1200px;width:50px"></div>
<div class="c g" style="left:1250px;width:50px"></div>
<div class="c g ctr" style="left:1300px;width:50px"></div>
<div class="c g" style="left:1350px;width:50px"></div>
<div class="c g ctr" style="left:1400px;width:50px"></div>
<div class="c g" style="left:1450px;width:50px"></div>
<div class="c g ctr" style="left:1500px;width:50px"></div>
<div class="c g" style="left:1550px;width:50px"></div>
<div class="c g ctr" style="left:1600px;width:50px"></div>
</div>
<div class="row alt" style="top:656px">
<div class="rn">41</div>
<div class="c" style="left:179px;width:133px"><u>NO.201706210001</u></div>
<div class="c" style="left:312px;width:104px">客户a</div>
<div class="c" style="left:416px;width:50px">19.70</div>
<div class="c" style="left:466px;width:85px"></div>
<div class="c" style="left:551px;width:40px"></div>
<div class="c" style="left:591px;width:59px"></div>
<div class="c y" style="left:650px;width:50px">0.3<span class="pm">‰</span></div>
<div class="c y ctr" style="left:700px;width:50px">0.01</div>
<div class="c y" style="left:750px;width:50px">0.2<span class="pm">‰</span></div>
<div class="c y ctr" style="left:800px;width:50px"></div>
<div class="c g" style="left:850px;width:50px"></div>
<div class="c g ctr" style="left:900px;width:50px"></div>
<div class="c g" style="left:950px;width:50px"></div>
<div class="c g ctr" style="left:1000px;width:50px"></div>
<div class="c g" style="left:1050px;width:50px"></div>
<div class="c g ctr" style="left:1100px;width:50px"></div>
<div class="c g" style="left:1150px;width:50px"></div>
<div class="c g ctr" style="left:1200px;width:50px"></div>
<div class="c g" style="left:1250px;width:50px"></div>
<div class="c g ctr" style="left:1300px;width:50px"></div>
<div class="c g" style="left:1350px;width:50px"></div>
<div class="c g ctr" style="left:1400px;width:50px"></div>
<div class="c g" style="left:1450px;width:50px"></div>
<div class="c g ctr" style="left:1500px;width:50px"></div>
<div class="c g" style="left:1550px;width:50px"></div>
<div class="c g ctr" style="left:1600px;width:50px"></div>
</div>
<div class="row" style="top:678px">
<div class="rn">42</div>
<div class="c" style="left:179px;width:133px"><u>NO.201706290002</u></div>
<div class="c" style="left:312px;width:104px">客户a</div>
<div class="c" style="left:416px;width:50px">12.00</div>
<div class="c" style="left:466px;width:85px"></div>
<div class="c" style="left:551px;width:40px"></div>
<div class="c" style="left:591px;width:59px"></div>
<div class="c y" style="left:650px;width:50px">0.3<span class="pm">‰</span></div>
<div class="c y ctr" style="left:700px;width:50px"></div>
<div class="c y" style="left:750px;width:50px"></div>
<div class="c y ctr" style="left:800px;width:50px"></div>
<div class="c g" style="left:850px;width:50px"></div>
<div class="c g ctr" style="left:900px;width:50px"></div>
<div class="c g" style="left:950px;width:50px"></div>
<div class="c g ctr" style="left:1000px;width:50px"></div>
<div class="c g" style="left:1050px;width:50px"></div>
<div class="c g ctr" style="left:1100px;width:50px"></div>
<div class="c g" style="left:1150px;width:50px"></div>
<div class="c g ctr" style="left:1200px;width:50px"></div>
<div class="c g" style="left:1250px;width:50px"></div>
<div class="c g ctr" style="left:1300px;width:50px"></div>
<div class="c g" style="left:1350px;width:50px"></div>
<div class="c g ctr" style="left:1400px;width:50px"></div>
<div class="c g" style="left:1450px;width:50px"></div>
<div class="c g ctr" style="left:1500px;width:50px"></div>
<div class="c g" style="left:1550px;width:50px"></div>
<div class="c g ctr" style="left:1600px;width:50px"></div>
</div>
<div class="row alt" style="top:700px">
<div class="rn">43</div>
<div class="c" style="left:179px;width:133px"><u>NO.201707030001</u></div>
<div class="c" style="left:312px;width:104px">客户a</div>
<div class="c" style="left:416px;width:50px">150.00</div>
<div class="c" style="left:466px;width:85px"></div>
<div class="c" style="left:551px;width:40px"></div>
<div class="c" style="left:591px;width:59px"></div>
<div class="c y" style="left:650px;width:50px">0.3<span class="pm">‰</span></div>
<div class="c y ctr" style="left:700px;width:50px">0.05</div>
<div class="c y" style="left:750px;width:50px">0.2<span class="pm">‰</span></div>
<div class="c y ctr" style="left:800px;width:50px">0.03</div>
<div class="c g" style="left:850px;width:50px"></div>
<div class="c g ctr" style="left:900px;width:50px"></div>
<div class="c g" style="left:950px;width:50px"></div>
<div class="c g ctr" style="left:1000px;width:50px"></div>
<div class="c g" style="left:1050px;width:50px"></div>
<div class="c g ctr" style="left:1100px;width:50px"></div>
<div class="c g" style="left:1150px;width:50px"></div>
<div class="c g ctr" style="left:1200px;width:50px"></div>
<div class="c g" style="left:1250px;width:50px"></div>
<div class="c g ctr" style="left:1300px;width:50px"></div>
<div class="c g" style="left:1350px;width:50px"></div>
<div class="c g ctr" style="left:1400px;width:50px"></div>
<div class="c g" style="left:1450px;width:50px"></div>
<div class="c g ctr" style="left:1500px;width:50px"></div>
<div class="c g" style="left:1550px;width:50px"></div>
<div class="c g ctr" style="left:1600px;width:50px"></div>
</div>
<div class="row" style="top:722px">
<div class="rn">44</div>
<div class="c" style="left:179px;width:133px"><u>NO.201707030001</u></div>
<div class="c" style="left:312px;width:104px">客户a</div>
<div class="c" style="left:416px;width:50px">150.00</div>
<div class="c" style="left:466px;width:85px">非凡广告</div>
<div class="c" style="left:551px;width:40px">1.00</div>
<div class="c" style="left:591px;width:59px">12.00</div>
<div class="c y" style="left:650px;width:50px"></div>
<div class="c y ctr" style="left:700px;width:50px"></div>
<div class="c y" style="left:750px;width:50px"></div>
<div class="c y ctr" style="left:800px;width:50px"></div>
<div class="c g" style="left:850px;width:50px">50%</div>
<div class="c g ctr" style="left:900px;width:50px">1.2</div>
<div class="c g" style="left:950px;width:50px"></div>
<div class="c g ctr" style="left:1000px;width:50px"></div>
<div class="c g" style="left:1050px;width:50px"></div>
<div class="c g ctr" style="left:1100px;width:50px"></div>
<div class="c g" style="left:1150px;width:50px"></div>
<div class="c g ctr" style="left:1200px;width:50px"></div>
<div class="c g" style="left:1250px;width:50px"></div>
<div class="c g ctr" style="left:1300px;width:50px"></div>
<div class="c g" style="left:1350px;width:50px"></div>
<div class="c g ctr" style="left:1400px;width:50px"></div>
<div class="c g" style="left:1450px;width:50px"></div>
<div class="c g ctr" style="left:1500px;width:50px"></div>
<div class="c g" style="left:1550px;width:50px"></div>
<div class="c g ctr" style="left:1600px;width:50px"></div>
</div>
<div class="row alt" style="top:744px">
<div class="rn">45</div>
<div class="c" style="left:179px;width:133px"><u>NO.201707050001</u></div>
<div class="c" style="left:312px;width:104px">供应商2</div>
<div class="c" style="left:416px;width:50px">200.00</div>
<div class="c" style="left:466px;width:85px"></div>
<div class="c" style="left:551px;width:40px"></div>
<div class="c" style="left:591px;width:59px"></div>
<div class="c y" style="left:650px;width:50px">0.3<span class="pm">‰</span></div>
<div class="c y ctr" style="left:700px;width:50px">0.06</div>
<div class="c y" style="left:750px;width:50px">0.2<span class="pm">‰</span></div>
<div class="c y ctr" style="left:800px;width:50px">0.04</div>
<div class="c g" style="left:850px;width:50px"></div>
<div class="c g ctr" style="left:900px;width:50px"></div>
<div class="c g" style="left:950px;width:50px"></div>
<div class="c g ctr" style="left:1000px;width:50px"></div>
<div class="c g" style="left:1050px;width:50px"></div>
<div class="c g ctr" style="left:1100px;width:50px"></div>
<div class="c g" style="left:1150px;width:50px"></div>
<div class="c g ctr" style="left:1200px;width:50px"></div>
<div class="c g" style="left:1250px;width:50px"></div>
<div class="c g ctr" style="left:1300px;width:50px"></div>
<div class="c g" style="left:1350px;width:50px"></div>
<div class="c g ctr" style="left:1400px;width:50px"></div>
<div class="c g" style="left:1450px;width:50px"></div>
<div class="c g ctr" style="left:1500px;width:50px"></div>
<div class="c g" style="left:1550px;width:50px"></div>
<div class="c g ctr" style="left:1600px;width:50px"></div>
</div>
<div class="row" style="top:766px">
<div class="rn">46</div>
<div class="c" style="left:179px;width:133px"><u>NO.201707200001</u></div>
<div class="c" style="left:312px;width:104px">客户a</div>
<div class="c" style="left:416px;width:50px">168.00</div>
<div class="c" style="left:466px;width:85px"></div>
<div class="c" style="left:551px;width:40px"></div>
<div class="c" style="left:591px;width:59px"></div>
<div class="c y" style="left:650px;width:50px">0.3<span class="pm">‰</span></div>
<div class="c y ctr" style="left:700px;width:50px">0.05</div>
<div class="c y" style="left:750px;width:50px">0.2<span class="pm">‰</span></div>
<div class="c y ctr" style="left:800px;width:50px">0.03</div>
<div class="c g" style="left:850px;width:50px"></div>
<div class="c g ctr" style="left:900px;width:50px"></div>
<div class="c g" style="left:950px;width:50px"></div>
<div class="c g ctr" style="left:1000px;width:50px"></div>
<div class="c g" style="left:1050px;width:50px"></div>
<div class="c g ctr" style="left:1100px;width:50px"></div>
<div class="c g" style="left:1150px;width:50px"></div>
<div class="c g ctr" style="left:1200px;width:50px"></div>
<div class="c g" style="left:1250px;width:50px"></div>
<div class="c g ctr" style="left:1300px;width:50px"></div>
<div class="c g" style="left:1350px;width:50px"></div>
<div class="c g ctr" style="left:1400px;width:50px"></div>
<div class="c g" style="left:1450px;width:50px"></div>
<div class="c g ctr" style="left:1500px;width:50px"></div>
<div class="c g" style="left:1550px;width:50px"></div>
<div class="c g ctr" style="left:1600px;width:50px"></div>
</div>
<div class="row alt" style="top:788px">
<div class="rn">47</div>
<div class="c" style="left:179px;width:133px"><u>NO.201707200001</u></div>
<div class="c" style="left:312px;width:104px">客户a</div>
<div class="c" style="left:416px;width:50px">168.00</div>
<div class="c" style="left:466px;width:85px">非凡广告+600</div>
<div class="c" style="left:551px;width:40px">14.00</div>
<div class="c" style="left:591px;width:59px">168.00</div>
<div class="c y" style="left:650px;width:50px"></div>
<div class="c y ctr" style="left:700px;width:50px"></div>
<div class="c y" style="left:750px;width:50px"></div>
<div class="c y ctr" style="left:800px;width:50px"></div>
<div class="c g" style="left:850px;width:50px"></div>
<div class="c g ctr" style="left:900px;width:50px"></div>
<div class="c g" style="left:950px;width:50px"></div>
<div class="c g ctr" style="left:1000px;width:50px"></div>
<div class="c g" style="left:1050px;width:50px"></div>
<div class="c g ctr" style="left:1100px;width:50px"></div>
<div class="c g" style="left:1150px;width:50px"></div>
<div class="c g ctr" style="left:1200px;width:50px"></div>
<div class="c g" style="left:1250px;width:50px"></div>
<div class="c g ctr" style="left:1300px;width:50px"></div>
<div class="c g" style="left:1350px;width:50px"></div>
<div class="c g ctr" style="left:1400px;width:50px"></div>
<div class="c g" style="left:1450px;width:50px"></div>
<div class="c g ctr" style="left:1500px;width:50px"></div>
<div class="c g" style="left:1550px;width:50px"></div>
<div class="c g ctr" style="left:1600px;width:50px"></div>
</div>
<div class="row" style="top:810px">
<div class="rn">48</div>
<div class="c" style="left:179px;width:133px"><u>NO.201707200002</u></div>
<div class="c" style="left:312px;width:104px">华润雪花啤酒（辽</div>
<div class="c" style="left:416px;width:50px">280.00</div>
<div class="c" style="left:466px;width:85px"></div>
<div class="c" style="left:551px;width:40px"></div>
<div class="c" style="left:591px;width:59px"></div>
<div class="c y" style="left:650px;width:50px">0.3<span class="pm">‰</span></div>
<div class="c y ctr" style="left:700px;width:50px">0.08</div>
<div class="c y" style="left:750px;width:50px">0.2<span class="pm">‰</span></div>
<div class="c y ctr" style="left:800px;width:50px">0.06</div>
<div class="c g" style="left:850px;width:50px"></div>
<div class="c g ctr" style="left:900px;width:50px"></div>
<div class="c g" style="left:950px;width:50px"></div>
<div class="c g ctr" style="left:1000px;width:50px"></div>
<div class="c g" style="left:1050px;width:50px"></div>
<div class="c g ctr" style="left:1100px;width:50px"></div>
<div class="c g" style="left:1150px;width:50px"></div>
<div class="c g ctr" style="left:1200px;width:50px"></div>
<div class="c g" style="left:1250px;width:50px"></div>
<div class="c g ctr" style="left:1300px;width:50px"></div>
<div class="c g" style="left:1350px;width:50px"></div>
<div class="c g ctr" style="left:1400px;width:50px"></div>
<div class="c g" style="left:1450px;width:50px"></div>
<div class="c g ctr" style="left:1500px;width:50px"></div>
<div class="c g" style="left:1550px;width:50px"></div>
<div class="c g ctr" style="left:1600px;width:50px"></div>
</div>
<div class="row alt" style="top:832px">
<div class="rn">49</div>
<div class="c" style="left:179px;width:133px"><u>NO.201707200001</u></div>
<div class="c" style="left:312px;width:104px">华润雪花啤酒（辽</div>
<div class="c" style="left:416px;width:50px">280.00</div>
<div class="c" style="left:466px;width:85px"></div>
<div class="c" style="left:551px;width:40px"></div>
<div class="c" style="left:591px;width:59px"></div>
<div class="c y" style="left:650px;width:50px">0.3<span class="pm">‰</span></div>
<div class="c y ctr" style="left:700px;width:50px">0.08</div>
<div class="c y" style="left:750px;width:50px">0.2<span class="pm">‰</span></div>
<div class="c y ctr" style="left:800px;width:50px">0.06</div>
<div class="c g" style="left:850px;width:50px"></div>
<div class="c g ctr" style="left:900px;width:50px"></div>
<div class="c g" style="left:950px;width:50px"></div>
<div class="c g ctr" style="left:1000px;width:50px"></div>
<div class="c g" style="left:1050px;width:50px"></div>
<div class="c g ctr" style="left:1100px;width:50px"></div>
<div class="c g" style="left:1150px;width:50px"></div>
<div class="c g ctr" style="left:1200px;width:50px"></div>
<div class="c g" style="left:1250px;width:50px"></div>
<div class="c g ctr" style="left:1300px;width:50px"></div>
<div class="c g" style="left:1350px;width:50px"></div>
<div class="c g ctr" style="left:1400px;width:50px"></div>
<div class="c g" style="left:1450px;width:50px"></div>
<div class="c g ctr" style="left:1500px;width:50px"></div>
<div class="c g" style="left:1550px;width:50px"></div>
<div class="c g ctr" style="left:1600px;width:50px"></div>
</div>
 </div>
 <div style="position:absolute;left:0;top:685px;width:1625px;height:1px;background:#a0a0a0"></div>
 <div id="foot">
  <div style="position:absolute;left:23px;top:0;width:1px;height:22px;background:#a0a0a0"></div>
<div class="fb" style="left:180px;width:131px">合<span style="display:inline-block;width:6px"> </span>计<span style="display:inline-block;width:6px;text-align:center">:</span></div>
<div class="fb y" style="left:701px;width:48px">40.74</div>
<div class="fb y" style="left:801px;width:48px">27.17</div>
<div class="fb g" style="left:901px;width:48px">2981.59</div>
<div class="fb g" style="left:1001px;width:48px">0</div>
<div class="fb g" style="left:1101px;width:48px">0</div>
<div class="fb g" style="left:1201px;width:48px">2109.24</div>
<div class="fb g" style="left:1301px;width:48px">0</div>
<div class="fb g" style="left:1401px;width:48px">154.78</div>
<div class="fb g" style="left:1501px;width:48px">0</div>
<div class="fb g" style="left:1601px;width:48px">0</div>
 </div>
</div>

<!-- vertical scrollbar -->
<div class="abs" style="left:1657px;top:157px;width:16px;height:710px;background:#f8f8f8 conic-gradient(#fff 25%,#f0f0f0 0 50%,#fff 0 75%,#f0f0f0 0) 0 0/2px 2px"></div>
<div class="abs" style="left:1657px;top:158px;width:16px;height:17px;background:#f0f0f0;border-top:1px solid #fff;border-left:1px solid #fff;border-bottom:1px solid #a0a0a0"></div>
<div class="tri" style="left:1662px;top:165px;border-left:4px solid transparent;border-right:4px solid transparent;border-bottom:4px solid #000"></div>
<div class="abs" style="left:1657px;top:384px;width:16px;height:267px;background:#f0f0f0;border-top:1px solid #fff;border-left:1px solid #fff;border-bottom:1px solid #a0a0a0"></div>
<div class="abs" style="left:1657px;top:850px;width:16px;height:17px;background:#f0f0f0;border-top:1px solid #fff;border-left:1px solid #fff;border-bottom:1px solid #a0a0a0"></div>
<div class="tri" style="left:1662px;top:857px;border-left:4px solid transparent;border-right:4px solid transparent;border-top:4px solid #000"></div>

<!-- horizontal scrollbar -->
<div class="abs" style="left:32px;top:867px;width:1641px;height:13px;background:#f8f8f8 conic-gradient(#fff 25%,#f0f0f0 0 50%,#fff 0 75%,#f0f0f0 0) 0 0/2px 2px"></div>
<div class="abs" style="left:32px;top:867px;width:17px;height:13px;background:#f0f0f0;border-right:1px solid #a0a0a0;border-top:1px solid #fff"></div>
<div class="tri" style="left:38px;top:871px;border-top:4px solid transparent;border-bottom:4px solid transparent;border-right:4px solid #000"></div>
<div class="abs" style="left:49px;top:867px;width:1279px;height:13px;background:#f0f0f0;border-right:1px solid #a0a0a0;border-top:1px solid #fff;border-left:1px solid #fff"></div>
<div class="abs" style="left:1641px;top:867px;width:16px;height:13px;background:#f0f0f0;border-right:1px solid #a0a0a0;border-top:1px solid #fff;border-left:1px solid #fff"></div>
<div class="tri" style="left:1646px;top:871px;border-top:4px solid transparent;border-bottom:4px solid transparent;border-left:4px solid #000"></div>
<div class="abs" style="left:1657px;top:867px;width:16px;height:13px;background:#f0f0f0"></div>
</body>
</html>
